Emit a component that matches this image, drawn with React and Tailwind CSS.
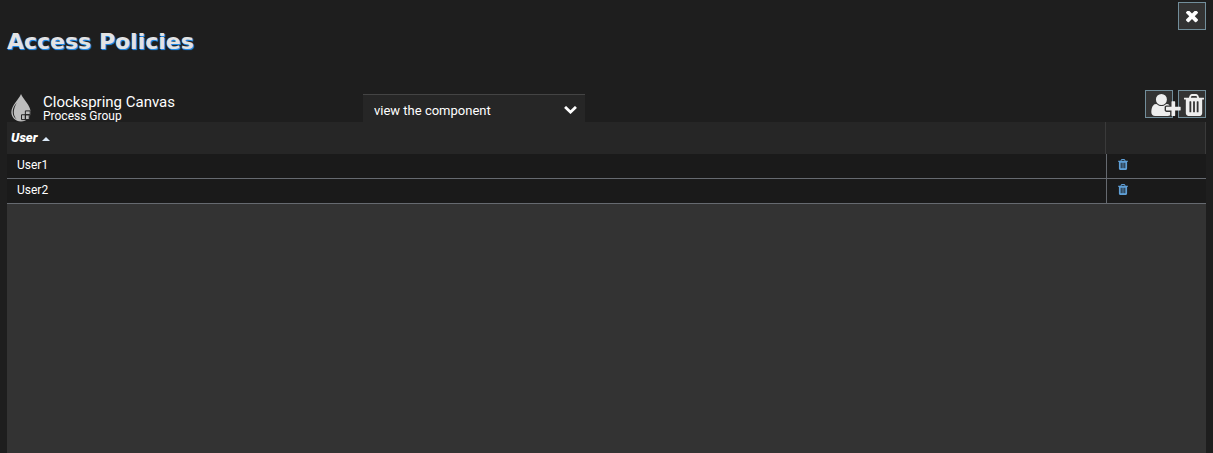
import React, { useState } from 'react';

const users = ['User1', 'User2'];

const actions = ['view the component', 'modify the component', 'view the data', 'modify the data'];

const TrashIcon = ({ className }) => (
    <svg className={className} viewBox="192 128 1408 1536" fill="currentColor" aria-hidden="true">
        <path d="M704 1376v-704q0-14-9-23t-23-9h-64q-14 0-23 9t-9 23v704q0 14 9 23t23 9h64q14 0 23-9t9-23zm256 0v-704q0-14-9-23t-23-9h-64q-14 0-23 9t-9 23v704q0 14 9 23t23 9h64q14 0 23-9t9-23zm256 0v-704q0-14-9-23t-23-9h-64q-14 0-23 9t-9 23v704q0 14 9 23t23 9h64q14 0 23-9t9-23zm-544-992h448l-48-117q-7-9-17-11h-317q-10 2-17 11zm928 32v64q0 14-9 23t-23 9h-96v948q0 83-47 143.5t-113 60.5h-832q-66 0-113-58.5t-47-141.5v-952h-96q-14 0-23-9t-9-23v-64q0-14 9-23t23-9h309l70-167q15-37 54-63t79-26h320q40 0 79 26t54 63l70 167h309q14 0 23 9t9 23z" />
    </svg>
);

const UserPlusIcon = ({ className }) => (
    <svg className={className} viewBox="0 128 2048 1536" fill="currentColor" aria-hidden="true">
        <path d="M704 896q-159 0-271.5-112.5t-112.5-271.5 112.5-271.5 271.5-112.5 271.5 112.5 112.5 271.5-112.5 271.5-271.5 112.5zm960 128h352q13 0 22.5 9.5t9.5 22.5v192q0 13-9.5 22.5t-22.5 9.5h-352v352q0 13-9.5 22.5t-22.5 9.5h-192q-13 0-22.5-9.5t-9.5-22.5v-352h-352q-13 0-22.5-9.5t-9.5-22.5v-192q0-13 9.5-22.5t22.5-9.5h352v-352q0-13 9.5-22.5t22.5-9.5h192q13 0 22.5 9.5t9.5 22.5v352zm-736 224q0 52 38 90t90 38h256v238q-68 50-171 50h-874q-121 0-194-69t-73-190q0-53 3.5-103.5t14-109 26.5-108.5 43-97.5 62-81 85.5-53.5 111.5-20q19 0 39 17 79 61 154.5 91.5t164.5 30.5 164.5-30.5 154.5-91.5q20-17 39-17 132 0 217 96h-223q-52 0-90 38t-38 90v192z" />
    </svg>
);

const CloseIcon = ({ className }) => (
    <svg className={className} viewBox="302 434 1188 1188" fill="currentColor" aria-hidden="true">
        <path d="M1490 1322q0 40-28 68l-136 136q-28 28-68 28t-68-28l-294-294-294 294q-28 28-68 28t-68-28l-136-136q-28-28-28-68t28-68l294-294-294-294q-28-28-28-68t28-68l136-136q28-28 68-28t68 28l294 294 294-294q28-28 68-28t68 28l136 136q28 28 28 68t-28 68l-294 294 294 294q28 28 28 68z" />
    </svg>
);

const ChevronDownIcon = ({ className }) => (
    <svg className={className} viewBox="90 533 1612 1035" fill="currentColor" aria-hidden="true">
        <path d="M1683 808l-742 741q-19 19-45 19t-45-19l-742-741q-19-19-19-45.5t19-45.5l166-165q19-19 45-19t45 19l531 531 531-531q19-19 45-19t45 19l166 165q19 19 19 45.5t-19 45.5z" />
    </svg>
);

// Water drop with the process group squares in its corner
const DropIcon = ({ className }) => (
    <svg className={className} viewBox="0 0 21 29" aria-hidden="true">
        <path d="M10 0C8 5 0 12 0 19c0 5 4 9.500 10 9.500S20 24 20 19C20 12 12 5 10 0z" fill="#bdbdbd" />
        <path d="M5.500 9C2.300 13 1 16 1.500 20c.3 3 2 5 4 6.500C3.500 24 2.500 22 2.500 19c0-3.500 1.300-6.500 3-10z" fill="#1e1e1e" />
        <g fill="#bdbdbd" stroke="#1e1e1e" strokeWidth="1">
            <path d="M14.500 17.500h5v4h-5zM10.500 21.500h4v5h-4zM14.500 21.500h4v5h-4z" />
        </g>
    </svg>
);

const IconButton = ({ label, children }) => (
    <button
        type="button"
        title={label}
        aria-label={label}
        className="flex h-7 w-7 shrink-0 items-center border border-[#728e9b] bg-[#333333] pt-0.5 text-[#eeeeee]"
    >
        {children}
    </button>
);

const App = () => {
    const [action, setAction] = useState(actions[0]);

    return (
        <div className="flex h-screen flex-col bg-[#1e1e1e] px-[7px] pt-0.5 font-['Roboto',sans-serif] text-white">
            <div className="flex justify-end">
                <IconButton label="Close">
                    <CloseIcon className="mx-auto h-3 w-3 text-white" />
                </IconButton>
            </div>

            <h1 className="text-[22px] leading-6 font-bold font-['DejaVu_Sans',sans-serif] text-[#e3e3e3] [text-shadow:1px_1px_0_#1e88e5,1px_1px_1px_#1e88e5]">
                Access Policies
            </h1>

            <div className="mt-9 flex h-8 items-start">
                <div className="flex w-[356px] shrink-0 items-start gap-[11px] pt-1 pl-1">
                    <DropIcon className="h-7 w-[21px]" />
                    <div>
                        <div className="text-[15px] leading-4">Clockspring Canvas</div>
                        <div className="text-xs leading-3">Process Group</div>
                    </div>
                </div>

                <div className="relative mt-1 w-[222px] shrink-0">
                    <select
                        aria-label="Policy"
                        value={action}
                        onChange={(e) => setAction(e.target.value)}
                        className="block h-8 w-full appearance-none border-t border-[#444444] bg-[#262626] px-[11px] text-[13px]"
                    >
                        {actions.map((name) => (
                            <option key={name}>{name}</option>
                        ))}
                    </select>
                    <ChevronDownIcon className="pointer-events-none absolute top-3 right-2 h-2 w-[13px]" />
                </div>

                <div className="ml-auto flex gap-[5px]">
                    <IconButton label="Add user">
                        {/* wider than its button, the plus hangs over the edge */}
                        <UserPlusIcon className="relative z-10 ml-[5px] h-[22px] w-[30px] shrink-0" />
                    </IconButton>
                    <IconButton label="Delete policy">
                        <TrashIcon className="ml-[5px] h-[22px] w-5 shrink-0" />
                    </IconButton>
                </div>
            </div>

            <div className="relative flex-1 bg-[#333333]">
                <table className="w-full table-fixed border-separate border-spacing-0 text-left text-xs">
                    <colgroup>
                        <col />
                        <col className="w-[100px]" />
                    </colgroup>
                    <thead>
                        <tr className="h-8 bg-[#262626]">
                            <th className="border-r border-[#3a3a3a] px-1 text-[13px] font-black italic">
                                <span className="flex items-center gap-1">
                                    User
                                    <svg className="mt-0.5 h-1 w-2" viewBox="0 0 8 4" fill="#dbe9f7" aria-hidden="true">
                                        <path d="M4 0l4 4H0z" />
                                    </svg>
                                </span>
                            </th>
                            <th className="border-r border-[#3a3a3a]" />
                        </tr>
                    </thead>
                    <tbody>
                        {users.map((user) => (
                            <tr key={user} className="h-[25px] bg-[#1a1a1a]">
                                <td className="border-b border-[#666a70] px-2.5 pb-0.5">{user}</td>
                                <td className="border-b border-l border-[#666a70] px-[11px] pb-[3px]">
                                    <button type="button" title="Remove" aria-label={`Remove ${user}`} className="block text-[#5f9fd6]">
                                        <TrashIcon className="h-[11px] w-2.5" />
                                    </button>
                                </td>
                            </tr>
                        ))}
                    </tbody>
                </table>
            </div>
        </div>
    );
};

export default App;
